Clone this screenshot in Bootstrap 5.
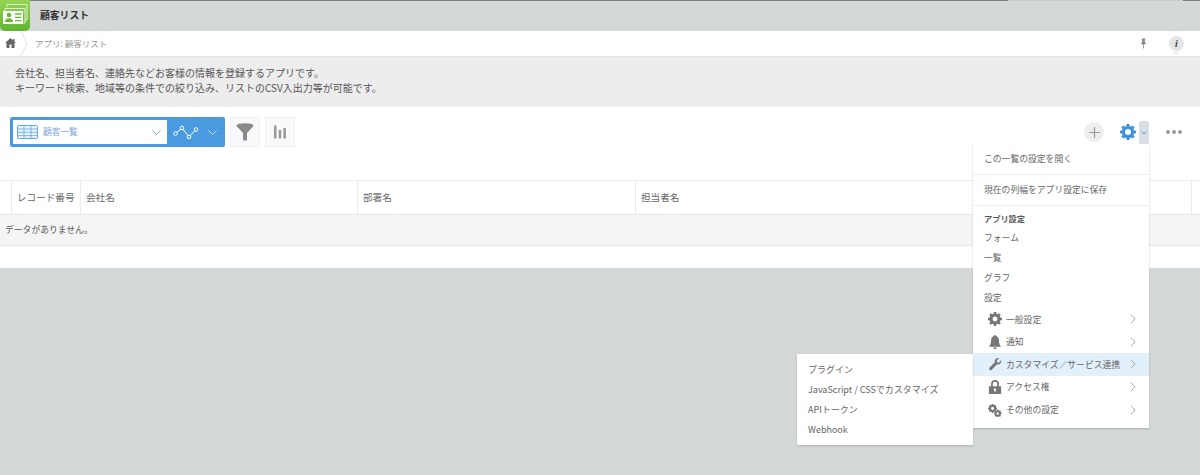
<!DOCTYPE html>
<html lang="ja">
<head>
<meta charset="utf-8">
<title>顧客リスト</title>
<link href="https://cdn.jsdelivr.net/npm/bootstrap@5.3.0/dist/css/bootstrap.min.css" rel="stylesheet">
<style>
html,body{height:475px;overflow:hidden}
body{background:#d4d8d7;font-family:"Noto Sans CJK JP","Noto Sans",sans-serif;font-size:10px;color:#555;position:relative;line-height:1.3}
.k-top{height:31px;background:#d4d8d7;position:relative;border-top:1px solid #7d7f7f}
.k-top-light{position:absolute;top:-1px;left:1008px;width:175px;height:1px;background:#c9cccc}
.k-logo{position:absolute;left:0;top:-1px;width:30px;height:31px}
.k-title{margin-left:40px;font-size:9.8px;font-weight:700;color:#333;line-height:28px}
.k-crumb{height:25px;background:#fff;position:relative;color:#999;font-size:8.5px}
.k-crumb-text{margin-left:35px}
.k-chev{position:absolute;left:20px;top:0}
.k-home{position:absolute;left:5px;top:7px}
.k-pin{position:absolute;left:1141px;top:7px}
.k-info{position:absolute;left:1169px;top:5px;width:15px;height:15px;border-radius:50%;background:#e3e6e6;color:#444;font:italic bold 10px/15px "Liberation Serif",serif;text-align:center}
.k-info::after{content:"";position:absolute;left:4px;top:15px;border:3px solid transparent;border-top:0;border-bottom:3px solid #ededed}
.k-desc{height:51px;background:#ededed;padding:8px 0 0 15px;font-size:10px;line-height:15px;color:#555;border-top:1px solid #e6e6e6}
.k-tools{height:73px;background:#fff;position:relative;padding:10px 0 0 10px;gap:5px}
.k-view{width:215px;height:30px;background:#4a9ae0;border-radius:2px;padding:3px}
.k-select{width:154px;height:24px;background:#fff;color:#7fa9d8;font-size:8.7px;padding:0 6px 0 4px}
.k-select span{flex:1;margin-left:5px}
.k-graph{flex:1;padding-left:6px;gap:9px}
.k-sq{width:30px;height:30px;background:#f7f9fa;border:1px solid #eef0f1;border-radius:1px}
.k-plus{position:absolute;left:1084px;top:15px;width:20px;height:20px;border-radius:50%;background:#eee}
.k-gear{position:absolute;left:1120px;top:17px}
.k-caret{position:absolute;left:1139px;top:14px;width:10px;height:23px;background:#d9dfe3;border-radius:2px 2px 0 0}
.k-dots{position:absolute;left:1166px;top:23px;gap:2px}
.k-dots i{width:4px;height:4px;border-radius:50%;background:#9a9a9a;display:block}
.k-head{height:35px;background:#fff;border-top:1px solid #ebebeb;border-bottom:1px solid #e6e6e6;font-size:9.6px;color:#666}
.k-head>div{flex:none;border-right:1px solid #ebebeb;height:100%;line-height:33px;padding-left:5px}
.k-head>.k-c0{width:12px;padding:0}.k-c1{width:69px}.k-c2{width:277px}.k-c3{width:278px}.k-c4{width:556px}
.k-row{height:31px;background:#f5f5f5;border-bottom:1px solid #e6e6e6;padding-left:5px;line-height:30px;font-size:8.8px;color:#555}
.k-blank{height:22px;background:#fff}
.k-menu{position:absolute;background:#fff;box-shadow:0 1px 2px rgba(0,0,0,.2);font-size:8.8px;color:#666}
.k-main{left:973px;top:144px;width:176px;height:284px}
.k-sub{left:797px;top:354px;width:176px;height:91px;padding:6px 0 0;font-size:9px}
.k-sub div{height:20px;line-height:20px;padding-left:11px}
.k-m1{height:31px;line-height:30px;padding-left:11px;border-bottom:1px solid #eee}
.k-m2{height:31px;line-height:29px;padding-left:11px;border-bottom:1px solid #eee}
.k-cap{font-size:8.2px;font-weight:700;color:#555;padding:6px 0 0 11px;line-height:12px;margin-bottom:4px}
.k-pl{height:20px;line-height:20px;padding-left:11px}
.k-it{height:22.6px;padding-left:15px}
.k-it svg:first-child{width:14px;height:14px;flex:none}
.k-it span{flex:1;margin-left:4px}
.k-it .k-arr{width:6px;height:10px;margin-right:13px;flex:none}
.k-on{background:#e2f0fb}
</style>
</head>
<body>
<div class="k-top">
  <div class="k-top-light"></div>
  <svg class="k-logo" viewBox="0 0 30 31"><defs><linearGradient id="lg" x1="0" y1="0" x2="0" y2="1"><stop offset="0" stop-color="#94d455"/><stop offset="1" stop-color="#5fb52e"/></linearGradient></defs><path d="M0 0h30v26a5 5 0 0 1-5 5H5a5 5 0 0 1-5-5z" fill="url(#lg)"/><path d="M7 7V4.500h20V20h-2M5 11V8.500h20V23h-2" fill="none" stroke="#e3f4d2" stroke-width="1"/><rect x="3" y="11" width="20" height="13" fill="#fff"/><circle cx="9" cy="15" r="2.300" fill="#63ba34"/><path d="M5 22c0-2.600 1.700-3.800 4-3.800s4 1.200 4 3.800z" fill="#63ba34"/><path d="M15 14h6.500M15 17.300h6.500M15 20.600h6.500" stroke="#63ba34" stroke-width="1.300"/></svg>
  <div class="k-title">顧客リスト</div>
</div>
<div class="k-crumb d-flex align-items-center">
  <svg class="k-home" width="11" height="10" viewBox="0 0 11 10"><path d="M5.500 0 0 5h1.500v5h3V6.500h2V10h3V5H11L9.500 3.600V1H8v1.300z" fill="#666"/></svg>
  <svg class="k-chev" width="8" height="25" viewBox="0 0 8 25"><path d="M1 0l6 12.500L1 25" fill="none" stroke="#e4e4e4"/></svg>
  <div class="k-crumb-text">アプリ: 顧客リスト</div>
  <svg class="k-pin" width="5" height="11" viewBox="0 0 6 12"><path d="M.5 0h5v1H4.600v3.500L6 6v1H3.500v5h-1V7H0V6l1.400-1.500V1H.5z" fill="#888"/></svg>
  <div class="k-info">i</div>
</div>
<div class="k-desc">会社名、担当者名、連絡先などお客様の情報を登録するアプリです。<br>キーワード検索、地域等の条件での絞り込み、リストのCSV入出力等が可能です。</div>
<div class="k-tools d-flex align-items-start">
  <div class="k-view d-flex">
    <div class="k-select d-flex align-items-center">
      <svg width="21" height="14" viewBox="0 0 21 14"><rect x=".5" y=".5" width="20" height="13" rx="1" fill="#eaf4fc" stroke="#63a7e5"/><path d="M.5 4h20M.5 7.300h20M.5 10.600h20M7 .5v13M14 .5v13" stroke="#63a7e5" stroke-width=".8"/></svg>
      <span>顧客一覧</span>
      <svg width="9" height="5" viewBox="0 0 9 5"><path d="M.5.500l4 4 4-4" fill="none" stroke="#7fa9d8"/></svg>
    </div>
    <div class="k-graph d-flex align-items-center">
      <svg width="26" height="15" viewBox="0 0 26 15"><path d="M3 8l6-5 7 9 7-7.500" fill="none" stroke="#fff"/><g fill="#4a9ae0" stroke="#fff"><circle cx="2.500" cy="8.500" r="1.800"/><circle cx="9" cy="3" r="1.800"/><circle cx="16" cy="12" r="1.800"/><circle cx="23" cy="4.500" r="1.800"/></g></svg>
      <svg width="9" height="5" viewBox="0 0 9 5"><path d="M.5.500l4 4 4-4" fill="none" stroke="#cfe4f7"/></svg>
    </div>
  </div>
  <div class="k-sq d-flex align-items-center justify-content-center"><svg width="18" height="18" viewBox="0 0 18 18"><ellipse cx="9" cy="2.500" rx="8.500" ry="2.300" fill="#8a8a8a"/><path d="M.5 3 7 10v7.500h4V10l6.500-7z" fill="#8a8a8a"/></svg></div>
  <div class="k-sq d-flex align-items-center justify-content-center"><svg width="12" height="14" viewBox="0 0 12 14"><path d="M0 .5h2.500V13.500H0zM4.700 5h2.500v8.500H4.700zM9.400 3h2.500v10.500H9.400z" fill="#999"/></svg></div>
  <div class="k-plus d-flex align-items-center justify-content-center"><svg width="11" height="11" viewBox="0 0 11 11"><path d="M5.500 0v11M0 5.500h11" stroke="#999" stroke-width="1.200"/></svg></div>
  <svg class="k-gear" width="16" height="16" viewBox="0 0 16 16"><path fill="#3f93de" fill-rule="evenodd" d="M6.700 0h2.600l.4 2.100 1.300.6 1.800-1.200 1.800 1.800-1.200 1.800.6 1.300 2 .3v2.600l-2 .4-.6 1.300 1.200 1.800-1.800 1.800-1.800-1.200-1.300.6-.4 2H6.700l-.4-2-1.300-.6-1.800 1.200-1.800-1.800 1.200-1.800-.6-1.300-2-.4V6.700l2-.3.6-1.300-1.200-1.800 1.800-1.800L5 2.700l1.300-.6zM8 5a3 3 0 1 0 0 6 3 3 0 0 0 0-6z"/></svg>
  <div class="k-caret d-flex align-items-center justify-content-center"><svg width="6" height="4" viewBox="0 0 6 4"><path d="M.5.500 3 3 5.500.500" fill="none" stroke="#3f93de"/></svg></div>
  <div class="k-dots d-flex"><i></i><i></i><i></i></div>
</div>
<div class="k-head d-flex">
  <div class="k-c0"></div><div class="k-c1">レコード番号</div><div class="k-c2">会社名</div><div class="k-c3">部署名</div><div class="k-c4">担当者名</div>
</div>
<div class="k-row">データがありません。</div>
<div class="k-blank"></div>

<div class="k-menu k-main">
  <div class="k-m1">この一覧の設定を開く</div>
  <div class="k-m2">現在の列幅をアプリ設定に保存</div>
  <div class="k-cap">アプリ設定</div>
  <div class="k-pl">フォーム</div>
  <div class="k-pl">一覧</div>
  <div class="k-pl">グラフ</div>
  <div class="k-pl">設定</div>
  <div class="k-it d-flex align-items-center"><svg viewBox="0 0 16 16"><path fill="#777" fill-rule="evenodd" d="M6.700 0h2.600l.4 2.100 1.300.6 1.800-1.200 1.800 1.800-1.200 1.800.6 1.300 2 .3v2.600l-2 .4-.6 1.300 1.200 1.800-1.800 1.800-1.800-1.200-1.300.6-.4 2H6.700l-.4-2-1.300-.6-1.800 1.200-1.800-1.800 1.200-1.800-.6-1.300-2-.4V6.700l2-.3.6-1.300-1.200-1.800 1.800-1.800L5 2.700l1.300-.6zM8 5.200a2.800 2.800 0 1 0 0 5.600 2.800 2.800 0 0 0 0-5.600z"/></svg><span>一般設定</span><svg class="k-arr" viewBox="0 0 7 11"><path d="M1 .5l5 5-5 5" fill="none" stroke="#999"/></svg></div>
  <div class="k-it d-flex align-items-center"><svg viewBox="0 0 16 16"><path fill="#777" d="M8 0c.7 0 1.100.5 1.100 1.100C11.300 1.600 12.500 3.400 12.500 6c0 3.500.8 5.500 2.500 7.500H1C2.700 11.500 3.500 9.500 3.500 6c0-2.600 1.200-4.400 3.400-4.900C6.900.5 7.300 0 8 0zM6 14.300h4a2 2 0 0 1-4 0z"/></svg><span>通知</span><svg class="k-arr" viewBox="0 0 7 11"><path d="M1 .5l5 5-5 5" fill="none" stroke="#999"/></svg></div>
  <div class="k-it k-on d-flex align-items-center"><svg viewBox="0 0 16 16"><path fill="#777" d="M15 3.500c.4 1.700-.1 3.200-1.300 4.200-1 .8-2.300 1-3.500.6L4.400 14.500a1.700 1.700 0 0 1-2.500 0 1.700 1.700 0 0 1-.1-2.400l6-6c-.4-1.200-.2-2.500.7-3.500C9.600 1.400 11.200 1 12.600 1.400L10 4l.5 2 2 .5z"/></svg><span>カスタマイズ／サービス連携</span><svg class="k-arr" viewBox="0 0 7 11"><path d="M1 .5l5 5-5 5" fill="none" stroke="#999"/></svg></div>
  <div class="k-it d-flex align-items-center"><svg viewBox="0 0 16 16"><path fill="#777" fill-rule="evenodd" d="M3.500 7V4.500a4.500 4.500 0 0 1 9 0V7H15v9H1V7zm2 0h5V4.500a2.500 2.500 0 0 0-5 0zM8 9.500a1.300 1.300 0 0 0-.7 2.400V13.500h1.400v-1.600A1.300 1.300 0 0 0 8 9.500z"/></svg><span>アクセス権</span><svg class="k-arr" viewBox="0 0 7 11"><path d="M1 .5l5 5-5 5" fill="none" stroke="#999"/></svg></div>
  <div class="k-it d-flex align-items-center"><svg viewBox="0 0 16 16"><g fill="#777" fill-rule="evenodd"><path d="M4.300 1h1.800l.3 1.200.8.400 1-.7 1.300 1.300-.7 1 .4.800 1.100.3v1.800l-1.100.2-.4.900.7 1-1.300 1.200-1-.7-.8.400-.3 1.200H4.300L4 10.100l-.8-.4-1 .7L.9 9.200l.7-1-.4-.9L0 7.100V5.300l1.200-.3.400-.8-.7-1 1.300-1.300 1 .7.800-.4zM5.200 4.500a1.700 1.700 0 1 0 0 3.400 1.700 1.700 0 0 0 0-3.400z"/><path d="M10.400 7.500h1.500l.3 1 .7.300.9-.5 1 1-.5.900.3.700 1 .3v1.500l-1 .2-.3.800.5.900-1 1-.9-.6-.7.300-.3 1h-1.500l-.2-1-.8-.3-.9.600-1-1 .5-.9-.3-.8-1-.2v-1.500l1-.3.3-.7-.5-.9 1-1 .9.5.8-.3zm.7 3a1.400 1.400 0 1 0 0 2.800 1.400 1.400 0 0 0 0-2.800z"/></g></svg><span>その他の設定</span><svg class="k-arr" viewBox="0 0 7 11"><path d="M1 .5l5 5-5 5" fill="none" stroke="#999"/></svg></div>
</div>
<div class="k-menu k-sub">
  <div>プラグイン</div>
  <div>JavaScript / CSSでカスタマイズ</div>
  <div>APIトークン</div>
  <div>Webhook</div>
</div>
<script src="https://cdn.jsdelivr.net/npm/bootstrap@5.3.0/dist/js/bootstrap.bundle.min.js"></script>
</body>
</html>
